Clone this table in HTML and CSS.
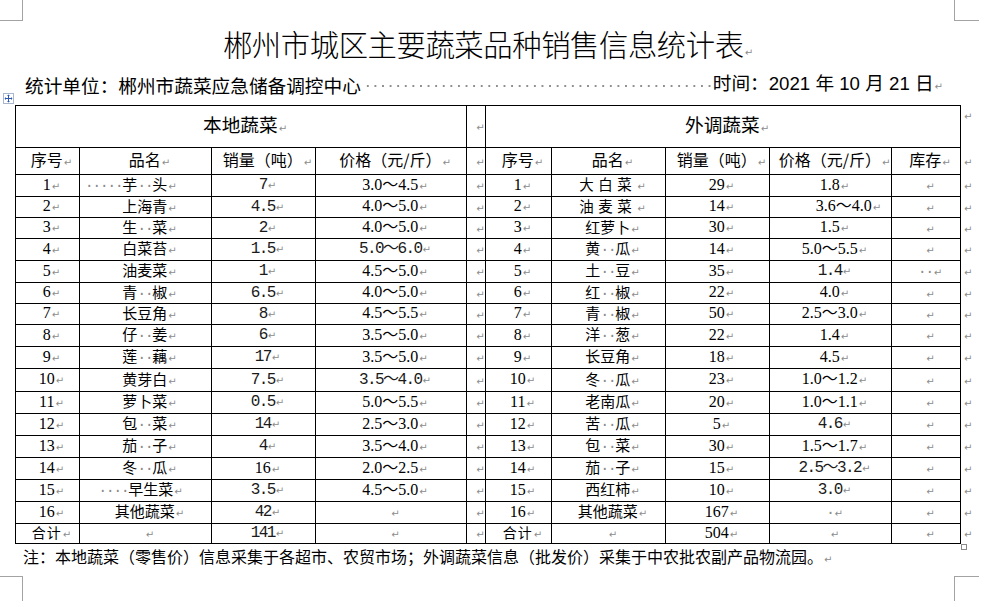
FILE: index.html
```html
<!DOCTYPE html>
<html lang="zh-CN">
<head>
<meta charset="utf-8">
<title>郴州市城区主要蔬菜品种销售信息统计表</title>
<link rel="stylesheet" href="styles.css">
</head>
<body>
<div class="page">
  <div class="crop tl"></div>
  <div class="crop tr"></div>
  <div class="crop bl"></div>
  <div class="crop br"></div>

  <h1 class="title pm">郴州市城区主要蔬菜品种销售信息统计表</h1>

  <div class="meta">
    <span class="unit">统计单位：郴州市蔬菜应急储备调控中心</span>
    <span class="fill"></span>
    <span class="date pm">时间：2021 年 10 月 21 日</span>
  </div>

  <div class="tablewrap">
    <span class="move"><svg width="11" height="11" viewBox="0 0 11 11"><rect x="0.5" y="0.5" width="10" height="10" fill="#fff" stroke="#a9b6cc"/><path d="M5.5 2v7M2 5.5h7" stroke="#2b56b3" stroke-width="1"/><path d="M5.5 1.5l-1.5 1.5h3zM5.5 9.5l-1.5-1.5h3zM1.5 5.5l1.5-1.5v3zM9.5 5.5l-1.5-1.5v3z" fill="#2b56b3"/></svg></span>
    <table class="grid">
      <colgroup>
        <col class="w64"><col class="w132"><col class="w104"><col class="w151"><col class="w19">
        <col class="w66"><col class="w114"><col class="w104b"><col class="w122"><col class="w69"><col class="w20">
      </colgroup>
      <tr class="h42"><td colspan="4" class="group">本地蔬菜</td><td></td><td colspan="5" class="group">外调蔬菜</td><td class="eor top"></td></tr>
      <tr class="h27 hd"><td>序号</td><td>品名</td><td>销量（吨）</td><td>价格（元/斤）</td><td></td><td>序号</td><td>品名</td><td>销量（吨）</td><td>价格（元/斤）</td><td>库存</td><td class="eor"></td></tr>

      <tr class="h22"><td class="n">1</td><td><span class="sp lead5">·····</span>芋<span class="sp">··</span>头</td><td class="m">7</td><td class="n">3.0～4.5</td><td></td><td class="n">1</td><td class="big">大白菜</td><td class="n">29</td><td class="n">1.8</td><td></td><td class="eor"></td></tr>
      <tr class="h21"><td class="n">2</td><td>上海青</td><td class="m">4.5</td><td class="n">4.0～5.0</td><td></td><td class="n">2</td><td class="big">油麦菜</td><td class="n">14</td><td class="n sh">3.6～4.0</td><td></td><td class="eor"></td></tr>
      <tr class="h21"><td class="n">3</td><td>生<span class="sp">··</span>菜</td><td class="m">2</td><td class="n">4.0～5.0</td><td></td><td class="n">3</td><td>红萝卜</td><td class="n">30</td><td class="n">1.5</td><td></td><td class="eor"></td></tr>
      <tr class="h22"><td class="n">4</td><td>白菜苔</td><td class="m">1.5</td><td class="m">5.0～6.0</td><td></td><td class="n">4</td><td>黄<span class="sp">··</span>瓜</td><td class="n">14</td><td class="n">5.0～5.5</td><td></td><td class="eor"></td></tr>
      <tr class="h22"><td class="n">5</td><td>油麦菜</td><td class="m">1</td><td class="n">4.5～5.0</td><td></td><td class="n">5</td><td>土<span class="sp">··</span>豆</td><td class="n">35</td><td class="m">1.4</td><td><span class="sp">··</span></td><td class="eor"></td></tr>
      <tr class="h21"><td class="n">6</td><td>青<span class="sp">··</span>椒</td><td class="m">6.5</td><td class="n">4.0～5.0</td><td></td><td class="n">6</td><td>红<span class="sp">··</span>椒</td><td class="n">22</td><td class="n">4.0</td><td></td><td class="eor"></td></tr>
      <tr class="h21"><td class="n">7</td><td>长豆角</td><td class="m">8</td><td class="n">4.5～5.5</td><td></td><td class="n">7</td><td>青<span class="sp">··</span>椒</td><td class="n">50</td><td class="n">2.5～3.0</td><td></td><td class="eor"></td></tr>
      <tr class="h22"><td class="n">8</td><td>仔<span class="sp">··</span>姜</td><td class="m">6</td><td class="n">3.5～5.0</td><td></td><td class="n">8</td><td>洋<span class="sp">··</span>葱</td><td class="n">22</td><td class="n">1.4</td><td></td><td class="eor"></td></tr>
      <tr class="h22"><td class="n">9</td><td>莲<span class="sp">··</span>藕</td><td class="m">17</td><td class="n">3.5～5.0</td><td></td><td class="n">9</td><td>长豆角</td><td class="n">18</td><td class="n">4.5</td><td></td><td class="eor"></td></tr>
      <tr class="h23"><td class="n">10</td><td>黄芽白</td><td class="m">7.5</td><td class="m">3.5～4.0</td><td></td><td class="n">10</td><td>冬<span class="sp">··</span>瓜</td><td class="n">23</td><td class="n">1.0～1.2</td><td></td><td class="eor"></td></tr>
      <tr class="h22"><td class="n">11</td><td>萝卜菜</td><td class="m">0.5</td><td class="n">5.0～5.5</td><td></td><td class="n">11</td><td>老南瓜</td><td class="n">20</td><td class="n">1.0～1.1</td><td></td><td class="eor"></td></tr>
      <tr class="h22"><td class="n">12</td><td>包<span class="sp">··</span>菜</td><td class="m">14</td><td class="n">2.5～3.0</td><td></td><td class="n">12</td><td>苦<span class="sp">··</span>瓜</td><td class="n">5</td><td class="m">4.6</td><td></td><td class="eor"></td></tr>
      <tr class="h22"><td class="n">13</td><td>茄<span class="sp">··</span>子</td><td class="m">4</td><td class="n">3.5～4.0</td><td></td><td class="n">13</td><td>包<span class="sp">··</span>菜</td><td class="n">30</td><td class="n">1.5～1.7</td><td></td><td class="eor"></td></tr>
      <tr class="h22"><td class="n">14</td><td>冬<span class="sp">··</span>瓜</td><td class="n">16</td><td class="n">2.0～2.5</td><td></td><td class="n">14</td><td>茄<span class="sp">··</span>子</td><td class="n">15</td><td class="m">2.5～3.2</td><td></td><td class="eor"></td></tr>
      <tr class="h22"><td class="n">15</td><td><span class="sp lead4">····</span>早生菜</td><td class="m">3.5</td><td class="n">4.5～5.0</td><td></td><td class="n">15</td><td>西红柿</td><td class="n">10</td><td class="m">3.0</td><td></td><td class="eor"></td></tr>
      <tr class="h22"><td class="n">16</td><td>其他蔬菜</td><td class="m">42</td><td></td><td></td><td class="n">16</td><td>其他蔬菜</td><td class="n">167</td><td><span class="sp">·</span></td><td></td><td class="eor"></td></tr>
      <tr class="h20"><td class="sum">合计</td><td></td><td class="m">141</td><td></td><td></td><td class="sum">合计</td><td></td><td class="n">504</td><td></td><td></td><td class="eor"></td></tr>
    </table>
    <span class="resize"></span>
  </div>

  <p class="note pm">注：本地蔬菜（零售价）信息采集于各超市、农贸市场；外调蔬菜信息（批发价）采集于中农批农副产品物流园。</p>
</div>
</body>
</html>
```

FILE: styles.css
```css
html, body {
  margin: 0;
  padding: 0;
  background: #ffffff;
}

body {
  font-family: "Noto Sans CJK SC", "Noto Sans", sans-serif;
  color: #000000;
}

.page {
  position: relative;
  width: 989px;
  height: 607px;
  overflow: hidden;
  padding-top: 23px;
  box-sizing: border-box;
}

/* page crop marks */
.crop {
  position: absolute;
  border: 0 solid #a3a3a3;
}
.crop.tl { left: 0; top: 0; width: 22px; height: 20px; border-right-width: 1px; border-bottom-width: 1px; }
.crop.tr { left: 954px; top: 0; width: 24px; height: 20px; border-left-width: 1px; border-bottom-width: 1px; }
.crop.bl { left: 0; top: 576px; width: 22px; height: 24px; border-right-width: 1px; border-top-width: 1px; }
.crop.br { left: 954px; top: 576px; width: 24px; height: 24px; border-left-width: 1px; border-top-width: 1px; }

/* paragraph marks */
.pm::after,
.grid td::after {
  content: "\21B5";
  font-family: "DejaVu Sans", sans-serif;
  font-size: 10px;
  font-weight: normal;
  letter-spacing: 0;
  color: #8c8c8c;
  margin-left: 1px;
}

.title {
  margin: 0 0 0 15px;
  width: 946px;
  height: 40px;
  line-height: 40px;
  font-size: 29.33px;
  font-weight: 300;
  letter-spacing: -0.4px;
  text-align: center;
}

.meta {
  display: flex;
  align-items: center;
  margin: 11px 0 0 25px;
  width: 918px;
  height: 22px;
  font-size: 18.67px;
  line-height: 22px;
  white-space: nowrap;
}

.meta .fill {
  flex: 1;
  height: 22px;
  margin: 0 2px 0 1px;
  background-image: radial-gradient(circle, #8f8f8f 0.9px, rgba(143,143,143,0) 1.3px);
  background-size: 7.6px 22px;
  background-repeat: repeat-x;
  background-position: 2px 1px;
}

.meta .date {
  font-family: "Liberation Sans", "Noto Sans CJK SC", sans-serif;
}

.tablewrap {
  position: relative;
  margin: 9px 0 0 15px;
  width: 965px;
}

.move {
  position: absolute;
  left: -12px;
  top: -12px;
  width: 11px;
  height: 11px;
  line-height: 0;
}

.resize {
  position: absolute;
  left: 946px;
  top: 439px;
  width: 4px;
  height: 4px;
  border: 1px solid #8a8a8a;
  background: #ffffff;
}

.grid {
  border-collapse: collapse;
  table-layout: fixed;
  width: 965px;
}

.w64 { width: 64px; }
.w132 { width: 132px; }
.w104 { width: 104px; }
.w151 { width: 151px; }
.w19 { width: 19px; }
.w66 { width: 66px; }
.w114 { width: 114px; }
.w104b { width: 104px; }
.w122 { width: 122px; }
.w69 { width: 69px; }
.w20 { width: 20px; }

.h42 { height: 42px; }
.h27 { height: 27px; }
.h23 { height: 23px; }
.h22 { height: 22px; }
.h21 { height: 21px; }
.h20 { height: 20px; }

.grid td {
  border: 1px solid #000000;
  padding: 0 0 0 8px;
  text-align: center;
  vertical-align: middle;
  font-size: 15px;
  line-height: 0;
  white-space: nowrap;
  overflow: visible;
}

.grid .hd td {
  font-size: 16px;
}

.grid td.group {
  font-size: 18.67px;
}

.grid td.sum {
  font-size: 14px;
  letter-spacing: 1px;
}

.grid td.eor {
  border: none;
  padding: 0 0 0 2px;
  text-align: left;
}

.grid td.eor.top {
  vertical-align: top;
  padding-top: 8px;
}

.grid td.n {
  font-family: "Liberation Serif", "Noto Sans CJK SC", serif;
  font-size: 16px;
}

.grid td.m {
  font-family: "Liberation Mono", "Noto Sans CJK SC", monospace;
  font-size: 16px;
  letter-spacing: -1.6px;
  color: #1a1a1a;
}

.grid td.big {
  font-size: 14.5px;
  letter-spacing: 4.5px;
}

.grid td.sh {
  padding-left: 36px;
}

.sp {
  font-family: "Liberation Mono", monospace;
  font-size: 15px;
  letter-spacing: -1.5px;
  color: #8c8c8c;
}

.lead5 { margin-left: -37.5px; }
.lead4 { margin-left: -18px; }

.note {
  margin: 2px 0 0 23px;
  font-size: 16px;
  line-height: 20px;
  white-space: nowrap;
}
```
